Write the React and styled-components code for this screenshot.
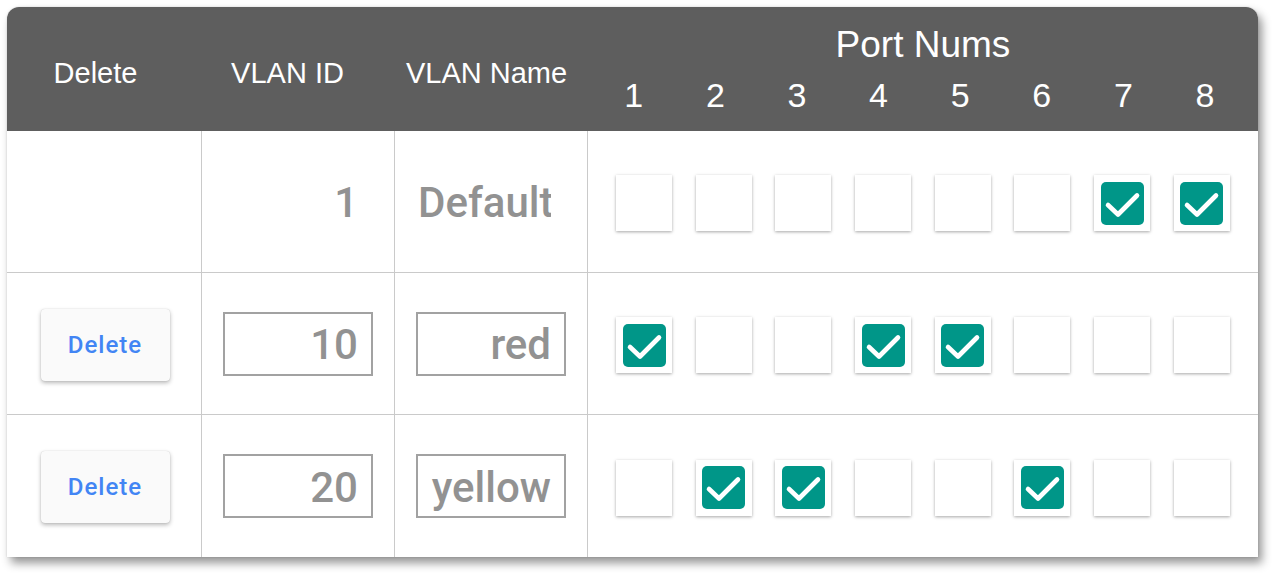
import React from "react";
import styled, { createGlobalStyle } from "styled-components";

const Global = createGlobalStyle`
  html, body { margin: 0; padding: 0; background: #ffffff; }
  body { font-family: "Liberation Sans", Arial, sans-serif; }
`;

const Page = styled.div`
  padding: 7px 0 22px 7px;
`;

const Card = styled.div`
  width: 1251px;
  border-radius: 12px 12px 0 0;
  overflow: hidden;
  background: #fff;
  box-shadow: 4px 6px 10px rgba(0, 0, 0, 0.42), 0 0 2px rgba(0, 0, 0, 0.15);
  display: grid;
  grid-template-columns: 195px 193px 193px 670px;
  grid-template-rows: 124px repeat(3, 142px);
`;

const HeadCell = styled.div`
  background: #5e5e5e;
  color: #fff;
  font-size: 29px;
  display: flex;
  align-items: center;
  justify-content: center;
  padding-top: 8px;
  padding-right: ${(p) => p.$shift * 2}px;
  box-sizing: border-box;
`;

const PortHead = styled.div`
  background: #5e5e5e;
  color: #fff;
  padding-top: 18px;
  box-sizing: border-box;
  display: flex;
  flex-direction: column;
  align-items: center;
`;

const PortTitle = styled.div`
  font-size: 37px;
  line-height: 40px;
  height: 40px;
`;

const PortNums = styled.div`
  align-self: flex-start;
  margin-left: 5px;
  margin-top: 10px;
  display: grid;
  grid-template-columns: repeat(8, 81.6px);
  font-size: 34px;
  line-height: 40px;
  text-align: center;
`;

const Cell = styled.div`
  box-sizing: border-box;
  display: flex;
  align-items: center;
  justify-content: center;
  border-right: ${(p) => (p.$last ? "none" : "1px solid #cacaca")};
  border-bottom: ${(p) => (p.$bottom ? "1px solid #cacaca" : "none")};
`;

const PortCell = styled(Cell)`
  justify-content: flex-start;
  padding-left: 28px;
  padding-top: 3px;
  gap: 23.7px;
`;

const DeleteButton = styled.button`
  width: 129px;
  height: 72px;
  background: #fafafa;
  border: none;
  border-radius: 4px;
  box-shadow: 0 2px 4px rgba(0, 0, 0, 0.28), 0 0 1px rgba(0, 0, 0, 0.2);
  color: #4285f4;
  font-family: Roboto, "Liberation Sans", sans-serif;
  font-weight: 500;
  font-size: 24px;
  letter-spacing: 1px;
  padding: 0;
  margin-left: 2px;
  margin-top: 2px;
  cursor: pointer;
`;

const Field = styled.input`
  width: 150px;
  height: 64px;
  box-sizing: border-box;
  border: 2px solid ${(p) => (p.$plain ? "transparent" : "#a2a2a2")};
  background: transparent;
  outline: none;
  text-align: right;
  padding: 2px 13px 0 0;
  margin: 0;
  font-family: Roboto, "Liberation Sans", Arial, sans-serif;
  font-weight: 500;
  font-size: 42px;
  color: #929292;
`;

const Box = styled.div`
  width: 56px;
  height: 56px;
  flex: none;
  background: #fff;
  box-shadow: 0 1px 3px rgba(0, 0, 0, 0.35);
  display: flex;
  align-items: center;
  justify-content: center;
`;

const Tick = styled.div`
  width: 43px;
  height: 43px;
  border-radius: 5px;
  background: #009688;
  display: flex;
  align-items: center;
  justify-content: center;
`;

const Check = ({ on }) => (
  <Box>
    {on && (
      <Tick>
        <svg width="43" height="43" viewBox="0 0 43 43">
          <path
            d="M7 23 L17 32.5 L36 13.5"
            fill="none"
            stroke="#fff"
            strokeWidth="4.6"
            strokeLinecap="round"
            strokeLinejoin="round"
          />
        </svg>
      </Tick>
    )}
  </Box>
);

const rows = [
  { id: "1", name: "Default", ports: [7, 8], fixed: true },
  { id: "10", name: "red", ports: [1, 4, 5] },
  { id: "20", name: "yellow", ports: [2, 3, 6] },
];

export default function App() {
  return (
    <>
      <Global />
      <Page>
        <Card>
          <HeadCell $shift={9}>Delete</HeadCell>
          <HeadCell $shift={11}>VLAN ID</HeadCell>
          <HeadCell $shift={5}>VLAN Name</HeadCell>
          <PortHead>
            <PortTitle>Port Nums</PortTitle>
            <PortNums>
              {[1, 2, 3, 4, 5, 6, 7, 8].map((n) => (
                <span key={n}>{n}</span>
              ))}
            </PortNums>
          </PortHead>
          {rows.map((r, i) => {
            const bottom = i < rows.length - 1;
            return (
              <React.Fragment key={r.id}>
                <Cell $bottom={bottom}>
                  {!r.fixed && <DeleteButton>Delete</DeleteButton>}
                </Cell>
                <Cell $bottom={bottom}>
                  <Field readOnly value={r.id} $plain={r.fixed} />
                </Cell>
                <Cell $bottom={bottom}>
                  <Field readOnly value={r.name} $plain={r.fixed} />
                </Cell>
                <PortCell $bottom={bottom} $last>
                  {[1, 2, 3, 4, 5, 6, 7, 8].map((p) => (
                    <Check key={p} on={r.ports.includes(p)} />
                  ))}
                </PortCell>
              </React.Fragment>
            );
          })}
        </Card>
      </Page>
    </>
  );
}
